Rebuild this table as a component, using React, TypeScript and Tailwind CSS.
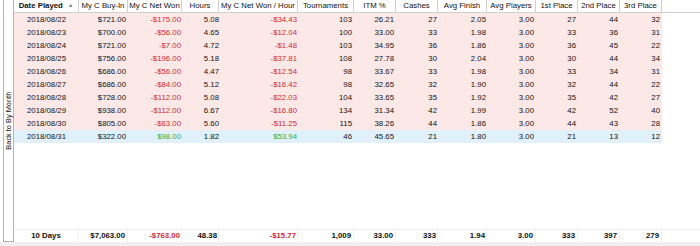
import React from "react";

type Row = {
  date: string;
  buyIn: string;
  netWon: string;
  hours: string;
  perHour: string;
  tourn: string;
  itm: string;
  cashes: string;
  avgFinish: string;
  avgPlayers: string;
  p1: string;
  p2: string;
  p3: string;
};

const rows: Row[] = [
  { date: "2018/08/22", buyIn: "$721.00", netWon: "-$175.00", hours: "5.08", perHour: "-$34.43", tourn: "103", itm: "26.21", cashes: "27", avgFinish: "2.05", avgPlayers: "3.00", p1: "27", p2: "44", p3: "32" },
  { date: "2018/08/23", buyIn: "$700.00", netWon: "-$56.00", hours: "4.65", perHour: "-$12.04", tourn: "100", itm: "33.00", cashes: "33", avgFinish: "1.98", avgPlayers: "3.00", p1: "33", p2: "36", p3: "31" },
  { date: "2018/08/24", buyIn: "$721.00", netWon: "-$7.00", hours: "4.72", perHour: "-$1.48", tourn: "103", itm: "34.95", cashes: "36", avgFinish: "1.86", avgPlayers: "3.00", p1: "36", p2: "45", p3: "22" },
  { date: "2018/08/25", buyIn: "$756.00", netWon: "-$196.00", hours: "5.18", perHour: "-$37.81", tourn: "108", itm: "27.78", cashes: "30", avgFinish: "2.04", avgPlayers: "3.00", p1: "30", p2: "44", p3: "34" },
  { date: "2018/08/26", buyIn: "$686.00", netWon: "-$56.00", hours: "4.47", perHour: "-$12.54", tourn: "98", itm: "33.67", cashes: "33", avgFinish: "1.98", avgPlayers: "3.00", p1: "33", p2: "34", p3: "31" },
  { date: "2018/08/27", buyIn: "$686.00", netWon: "-$84.00", hours: "5.12", perHour: "-$16.42", tourn: "98", itm: "32.65", cashes: "32", avgFinish: "1.90", avgPlayers: "3.00", p1: "32", p2: "44", p3: "22" },
  { date: "2018/08/28", buyIn: "$728.00", netWon: "-$112.00", hours: "5.08", perHour: "-$22.03", tourn: "104", itm: "33.65", cashes: "35", avgFinish: "1.92", avgPlayers: "3.00", p1: "35", p2: "42", p3: "27" },
  { date: "2018/08/29", buyIn: "$938.00", netWon: "-$112.00", hours: "6.67", perHour: "-$16.80", tourn: "134", itm: "31.34", cashes: "42", avgFinish: "1.99", avgPlayers: "3.00", p1: "42", p2: "52", p3: "40" },
  { date: "2018/08/30", buyIn: "$805.00", netWon: "-$63.00", hours: "5.60", perHour: "-$11.25", tourn: "115", itm: "38.26", cashes: "44", avgFinish: "1.86", avgPlayers: "3.00", p1: "44", p2: "43", p3: "28" },
  { date: "2018/08/31", buyIn: "$322.00", netWon: "$98.00", hours: "1.82", perHour: "$53.94", tourn: "46", itm: "45.65", cashes: "21", avgFinish: "1.80", avgPlayers: "3.00", p1: "21", p2: "13", p3: "12" },
];

const headers = [
  "Date Played",
  "My C Buy-In",
  "My C Net Won",
  "Hours",
  "My C Net Won / Hour",
  "Tournaments",
  "ITM %",
  "Cashes",
  "Avg Finish",
  "Avg Players",
  "1st Place",
  "2nd Place",
  "3rd Place",
];

const GRID =
  "grid grid-cols-[65px_49px_54px_37px_79px_56px_42px_42px_49px_49px_42px_42px_42px]";

function moneyColor(v: string) {
  return v.startsWith("-") ? "text-[#d0283a]" : "text-[#2fae35]";
}

export default function App() {
  return (
    <div
      className="w-[700px] h-[246px] bg-white flex flex-col overflow-hidden text-[#111111]"
      style={{ fontFamily: '"Liberation Sans", Arial, sans-serif' }}
    >
      <div className="flex h-[242px]">
        {/* side button */}
        <div className="w-[14px] shrink-0 pl-[3px]">
          <div className="w-[11px] h-[242px] border border-t-0 border-[#b4b4b4] bg-white flex items-center justify-center">
            <span className="-rotate-90 whitespace-nowrap text-[7.4px] leading-none text-[#111]">
              Back to By Month
            </span>
          </div>
        </div>

        {/* grid */}
        <div className="flex-1 flex flex-col text-[7.8px] leading-none">
          {/* header */}
          <div className="h-[13px] border-b border-[#d0d0d0] flex">
            <div className={GRID + " h-full"}>
              {headers.map((h, i) => (
                <div
                  key={h}
                  className={
                    "flex items-center justify-center border-r border-[#cfcfcf] whitespace-nowrap " +
                    (i === 0 ? "font-bold" : "")
                  }
                >
                  {h}
                  {i === 0 && (
                    <span className="ml-[5px] text-[5.5px] text-[#808080]">▲</span>
                  )}
                </div>
              ))}
            </div>
          </div>

          {/* body */}
          {rows.map((r, idx) => (
            <div
              key={r.date}
              className={
                GRID +
                " h-[13px] w-[648px] " +
                (idx === rows.length - 1 ? "bg-[#e1f1fb]" : "bg-[#fde8e8]")
              }
            >
              <div className="flex items-center justify-center">{r.date}</div>
              <div className="flex items-center justify-end pr-[2px]">{r.buyIn}</div>
              <div className={"flex items-center justify-end pr-[1px] " + moneyColor(r.netWon)}>{r.netWon}</div>
              <div className="flex items-center justify-end pr-0">{r.hours}</div>
              <div className={"flex items-center justify-end pr-[1px] " + moneyColor(r.perHour)}>{r.perHour}</div>
              <div className="flex items-center justify-end pr-[2px]">{r.tourn}</div>
              <div className="flex items-center justify-end pr-[2px]">{r.itm}</div>
              <div className="flex items-center justify-end pr-[1px]">{r.cashes}</div>
              <div className="flex items-center justify-end pr-[1px]">{r.avgFinish}</div>
              <div className="flex items-center justify-end pr-[2px]">{r.avgPlayers}</div>
              <div className="flex items-center justify-end pr-[2px]">{r.p1}</div>
              <div className="flex items-center justify-end pr-[2px]">{r.p2}</div>
              <div className="flex items-center justify-end pr-[2px]">{r.p3}</div>
            </div>
          ))}

          <div className="flex-1" />

          {/* footer */}
          <div className="h-[13px] border-t border-[#efefef] font-bold">
            <div className={GRID + " h-full"}>
              <div className="flex items-center justify-center border-r border-[#efefef]">10 Days</div>
              <div className="flex items-center justify-end pr-[2px] border-r border-[#efefef]">$7,063.00</div>
              <div className="flex items-center justify-end pr-[1px] border-r border-[#efefef] text-[#d0283a]">-$763.00</div>
              <div className="flex items-center justify-end pr-[1px] border-r border-[#efefef]">48.38</div>
              <div className="flex items-center justify-end pr-[1px] border-r border-[#efefef] text-[#d0283a]">-$15.77</div>
              <div className="flex items-center justify-end pr-[2px] border-r border-[#efefef]">1,009</div>
              <div className="flex items-center justify-end pr-[2px] border-r border-[#efefef]">33.00</div>
              <div className="flex items-center justify-end pr-[1px] border-r border-[#efefef]">333</div>
              <div className="flex items-center justify-end pr-[1px] border-r border-[#efefef]">1.94</div>
              <div className="flex items-center justify-end pr-[2px] border-r border-[#efefef]">3.00</div>
              <div className="flex items-center justify-end pr-[2px] border-r border-[#efefef]">333</div>
              <div className="flex items-center justify-end pr-[2px] border-r border-[#efefef]">397</div>
              <div className="flex items-center justify-end pr-[2px] border-r border-[#efefef]">279</div>
            </div>
          </div>
        </div>
      </div>
      <div className="h-[4px] bg-[#f0f0f0]" />
    </div>
  );
}
